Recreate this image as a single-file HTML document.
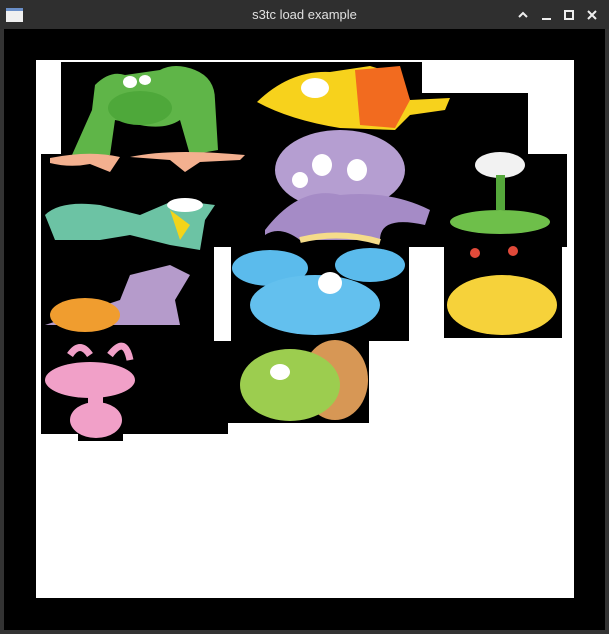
<!DOCTYPE html>
<html><head><meta charset="utf-8"><style>
html,body{margin:0;padding:0;width:609px;height:634px;overflow:hidden;background:#333;}
#tb{position:absolute;left:0;top:0;width:609px;height:29px;background:#2f2f2f;}
#tb .t{position:absolute;left:0;right:0;top:7px;text-align:center;color:#e0e0e0;font:13px "Liberation Sans",sans-serif;}
#ic{position:absolute;left:6px;top:8px;width:17px;height:14px;background:#f0f0f0;border-top:3px solid #6a8fc8;box-sizing:border-box;}
#body{position:absolute;left:4px;top:29px;width:601px;height:601px;background:#000;}
.b{position:absolute;background:#000;}
</style></head><body>
<div id="tb"><div id="ic"></div><div class="t">s3tc load example</div>
<svg style="position:absolute;left:515px;top:8px" width="90" height="14" viewBox="0 0 90 14" fill="none" stroke="#eee" stroke-width="2">
<path d="M4 9 L8 5 L12 9"/><path d="M27 11 H36"/><rect x="50" y="3" width="8" height="8"/><path d="M73 3 L81 11 M81 3 L73 11"/></svg></div>
<div id="body"></div>
<div style="position:absolute;left:36px;top:60px;width:538px;height:538px;background:#fff"></div>
<div class="b" style="left:61px;top:62px;width:361px;height:92px"></div>
<div class="b" style="left:422px;top:93px;width:106px;height:61px"></div>
<div class="b" style="left:41px;top:154px;width:526px;height:93px"></div>
<div class="b" style="left:41px;top:247px;width:173px;height:94px"></div>
<div class="b" style="left:231px;top:244px;width:178px;height:97px"></div>
<div class="b" style="left:444px;top:247px;width:118px;height:91px"></div>
<div class="b" style="left:41px;top:341px;width:328px;height:82px"></div>
<div class="b" style="left:41px;top:423px;width:187px;height:11px"></div>
<div class="b" style="left:78px;top:434px;width:45px;height:7px"></div>
<svg style="position:absolute;left:0;top:0" width="609" height="634">
<!-- green monster -->
<path d="M72 155 L92 110 L95 85 Q110 70 125 75 L160 70 Q175 62 195 70 Q215 78 215 100 L218 150 L190 155 L180 120 Q165 130 140 125 L115 120 L110 155 Z" fill="#5fb548"/>
<ellipse cx="140" cy="108" rx="32" ry="17" fill="#4ea83a"/>
<ellipse cx="130" cy="82" rx="7" ry="6" fill="#fff"/><ellipse cx="145" cy="80" rx="6" ry="5" fill="#fff"/>
<path d="M50 158 Q90 150 120 157 L110 172 L90 164 Q70 168 50 163Z M130 157 Q170 148 245 155 L240 160 L200 162 L185 172 L170 160 Z" fill="#f3b08f"/>
<!-- fish -->
<path d="M257 102 Q290 70 330 72 L370 66 L400 75 L410 100 L450 98 L445 110 L410 115 L395 130 L340 128 Q290 120 257 102Z" fill="#f7d21c"/>
<path d="M355 70 L400 66 L410 100 L395 128 L360 125Z" fill="#f26b1f"/>
<ellipse cx="315" cy="88" rx="14" ry="10" fill="#fff"/>
<!-- octopus -->
<ellipse cx="340" cy="170" rx="65" ry="40" fill="#b59ed1"/>
<path d="M265 230 Q300 185 340 195 Q390 190 430 210 L425 225 Q380 215 380 240 L300 240 Q280 225 265 235Z" fill="#a58bc6"/>
<path d="M300 240 Q340 230 380 242" stroke="#f5dc8a" stroke-width="6" fill="none"/>
<ellipse cx="322" cy="165" rx="10" ry="11" fill="#fff"/><ellipse cx="357" cy="170" rx="10" ry="11" fill="#fff"/><ellipse cx="300" cy="180" rx="8" ry="8" fill="#fff"/>
<!-- eye stalk -->
<ellipse cx="500" cy="165" rx="25" ry="13" fill="#f2f2f2"/>
<rect x="496" y="175" width="9" height="35" fill="#55a83b"/>
<ellipse cx="500" cy="222" rx="50" ry="12" fill="#6ebf4a"/>
<!-- lizard -->
<path d="M45 215 Q60 200 100 205 L140 215 L175 200 L215 205 L205 220 L200 250 L170 245 L130 235 L100 240 L55 240 Z" fill="#6cc3a4"/>
<ellipse cx="185" cy="205" rx="18" ry="7" fill="#fff"/>
<path d="M170 210 L190 225 L180 240" fill="#f4d419"/>
<!-- snail purple -->
<path d="M45 325 L180 325 L175 300 L190 275 L170 265 L130 275 L120 300 Z" fill="#bfa3d6" opacity=".95"/>
<ellipse cx="85" cy="315" rx="35" ry="17" fill="#f09d2f"/>
<!-- blue -->
<ellipse cx="270" cy="268" rx="38" ry="18" fill="#5bbbec"/>
<ellipse cx="370" cy="265" rx="35" ry="17" fill="#5bbbec"/>
<ellipse cx="315" cy="305" rx="65" ry="30" fill="#63c0ee"/>
<ellipse cx="330" cy="283" rx="12" ry="11" fill="#fff"/>
<!-- yellow pot -->
<ellipse cx="502" cy="305" rx="55" ry="30" fill="#f6d23a"/>
<circle cx="475" cy="253" r="5" fill="#e14a3a"/><circle cx="513" cy="251" r="5" fill="#e14a3a"/>
<!-- pink -->
<ellipse cx="90" cy="380" rx="45" ry="18" fill="#f1a0c8"/>
<ellipse cx="96" cy="420" rx="26" ry="18" fill="#f1a0c8"/>
<rect x="88" y="390" width="15" height="20" fill="#f1a0c8"/>
<path d="M70 355 Q80 340 90 355 M110 355 Q125 335 130 360" stroke="#f1a0c8" stroke-width="7" fill="none"/>
<!-- green turtle -->
<ellipse cx="335" cy="380" rx="33" ry="40" fill="#d79755"/>
<ellipse cx="290" cy="385" rx="50" ry="36" fill="#9ccd4f"/>
<ellipse cx="280" cy="372" rx="10" ry="8" fill="#fff"/>
</svg>
</body></html>
